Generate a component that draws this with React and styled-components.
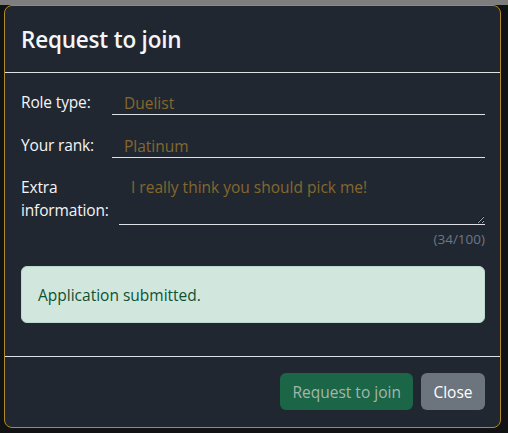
import React from 'react'
import styled, { createGlobalStyle } from 'styled-components'

const GlobalStyle = createGlobalStyle`
  html, body {
    margin: 0;
    padding: 0;
    background: #101214;
  }
  body {
    font-family: "Open Sans", "Noto Sans", sans-serif;
  }
`

/**
 * backdrop behind the dialog
 */
const Backdrop = styled.div`
  width: 508px;
  height: 433px;
  box-sizing: border-box;
  padding: 5px 7px 5px 4px;
  background: linear-gradient(#7e7e7e 0 5px, #101214 5px);
`

const Modal = styled.section`
  height: 423px;
  box-sizing: border-box;
  display: flex;
  flex-direction: column;
  background: #212730;
  border: 1px solid #b08a2a;
  border-radius: 8px;
  color: #f4f5f7;
  overflow: hidden;
`

const Header = styled.header`
  height: 67px;
  box-sizing: border-box;
  display: flex;
  align-items: center;
  padding: 0 16px;
  border-bottom: 1px solid #dee2e6;
`

const Title = styled.h5`
  margin: 0;
  font-size: 22.5px;
  font-weight: 600;
  letter-spacing: -0.2px;
`

const Body = styled.div`
  flex: 1;
  padding: 13px 15px 0 16px;
  display: flex;
  flex-direction: column;
`

const Row = styled.div`
  display: flex;
  align-items: ${p => (p.$top ? 'flex-start' : 'flex-end')};
  margin-bottom: ${p => p.$mb || 0}px;
`

const Label = styled.label`
  width: ${p => p.$width}px;
  flex-shrink: 0;
  font-size: 15.5px;
  line-height: 23px;
  letter-spacing: -0.15px;
  padding-bottom: ${p => (p.$top ? 0 : 1)}px;
  padding-top: ${p => (p.$top ? 2 : 0)}px;
`

const Input = styled.input`
  flex: 1;
  min-width: 0;
  height: 29px;
  box-sizing: border-box;
  padding: 6px 12px 0;
  border: none;
  border-bottom: 1px solid #dee2e6;
  background: transparent;
  color: #84682e;
  font: 15.5px "Open Sans", "Noto Sans", sans-serif;
  outline: none;
`

const TextArea = styled.textarea`
  flex: 1;
  min-width: 0;
  height: 51px;
  box-sizing: border-box;
  padding: 2px 12px 0;
  border: none;
  border-bottom: 1px solid #dee2e6;
  background: transparent;
  color: #84682e;
  font: 15.5px/23px "Open Sans", "Noto Sans", sans-serif;
  resize: vertical;
  outline: none;
`

const Counter = styled.div`
  align-self: flex-end;
  margin-top: 5px;
  font-size: 13.5px;
  color: #6c7785;
`

const Alert = styled.div`
  margin-top: 18px;
  height: 57px;
  box-sizing: border-box;
  display: flex;
  align-items: center;
  padding: 0 16px;
  background: #d1e7dd;
  border: 1px solid #badbcc;
  border-radius: 6px;
  color: #0f5132;
  font-size: 15.5px;
`

const Footer = styled.footer`
  height: 71px;
  box-sizing: border-box;
  display: flex;
  justify-content: flex-end;
  align-items: flex-start;
  gap: 8px;
  padding: 16px 15px 0;
  border-top: 1px solid #dee2e6;
`

const Button = styled.button`
  height: 37px;
  padding: 0 ${p => p.$px}px;
  border: none;
  border-radius: 6px;
  background: ${p => p.$bg};
  color: ${p => p.$fg};
  font: 15.5px "Open Sans", "Noto Sans", sans-serif;
  cursor: pointer;
`

const App = () => {
  return (
    <>
      <GlobalStyle />
      <Backdrop>
        <Modal>
          <Header>
            <Title>Request to join</Title>
          </Header>
          <Body>
            <Row $mb={14}>
              <Label $width={91}>Role type:</Label>
              <Input readOnly value='Duelist' />
            </Row>
            <Row $mb={16}>
              <Label $width={91}>Your rank:</Label>
              <Input readOnly value='Platinum' />
            </Row>
            <Row $top>
              <Label $width={98} $top>Extra information:</Label>
              <TextArea readOnly value='I really think you should pick me!' />
            </Row>
            <Counter>(34/100)</Counter>
            <Alert>Application submitted.</Alert>
          </Body>
          <Footer>
            <Button $px={12} $bg='#1b6646' $fg='#a3b6ab'>Request to join</Button>
            <Button $px={12.5} $bg='#6c757d' $fg='#ffffff'>Close</Button>
          </Footer>
        </Modal>
      </Backdrop>
    </>
  )
}

export default App
